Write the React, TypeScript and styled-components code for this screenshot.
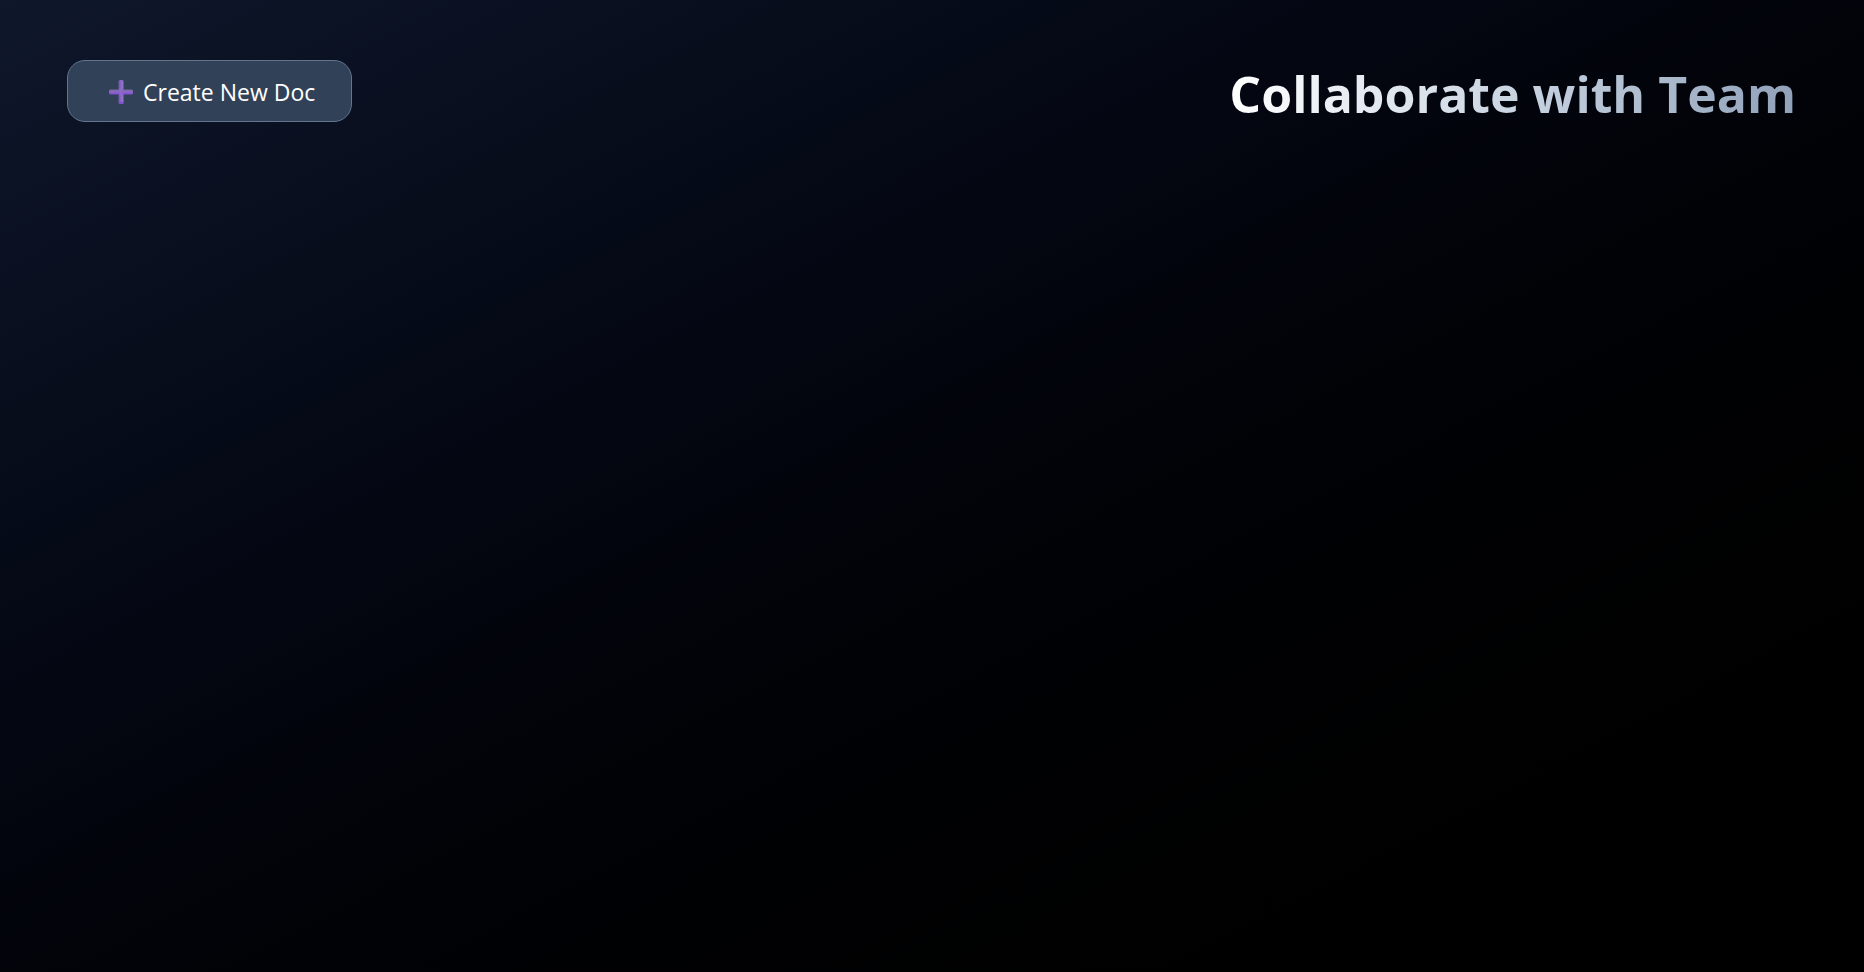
import React from "react";
import styled, { createGlobalStyle } from "styled-components";

const GlobalStyle = createGlobalStyle`
  *, *::before, *::after { box-sizing: border-box; }
  body {
    margin: 0;
    background: #000;
    font-family: "Segoe UI", "Open Sans", "Noto Sans", sans-serif;
  }
`;

const Page = styled.main`
  min-height: 100vh;
  padding: 60px 68px 60px 67px;
  background: linear-gradient(to bottom right in oklab, #0f172b, #000);
`;

const Header = styled.header`
  display: flex;
  align-items: flex-start;
  justify-content: space-between;
  gap: 32px;
`;

const CreateButton = styled.button`
  display: flex;
  align-items: center;
  gap: 10px;
  height: 62px;
  padding: 2px 36px 0 41px;
  border: 1px solid #62748e;
  border-radius: 18px;
  background: #314158;
  color: #fff;
  font-family: inherit;
  font-size: 23px;
  line-height: 32px;
  white-space: nowrap;
  cursor: pointer;
`;

const Title = styled.h1`
  margin: 0;
  background: linear-gradient(to right in oklab, #fff, #cad5e2 50%, #90a1b9);
  background-clip: text;
  -webkit-background-clip: text;
  color: transparent;
  font-size: 50px;
  font-weight: 700;
  line-height: 68px;
`;

const PlusIcon = () => (
  <svg width="24" height="24" viewBox="0 0 24 24" aria-hidden="true">
    <defs>
      <linearGradient id="plusAcross" x1="0" y1="0" x2="0" y2="1">
        <stop offset="0" stopColor="#7a6a9e" />
        <stop offset="0.5" stopColor="#8a69c4" />
        <stop offset="1" stopColor="#8149d8" />
      </linearGradient>
      <linearGradient id="plusDown" x1="0" y1="0" x2="1" y2="0">
        <stop offset="0" stopColor="#6f569f" />
        <stop offset="0.5" stopColor="#8b68cc" />
        <stop offset="1" stopColor="#9278c4" />
      </linearGradient>
    </defs>
    <rect x="9.5" y="0" width="5" height="24" rx="1.5" fill="url(#plusDown)" />
    <rect x="0" y="9.5" width="24" height="5" rx="1.5" fill="url(#plusAcross)" />
    <rect x="10.5" y="8" width="3" height="8" fill="#8b68cc" />
    <path d="M10.5 22.8h3" stroke="#8145dc" strokeWidth="1.6" strokeLinecap="round" />
  </svg>
);

export default function App() {
  return (
    <>
      <GlobalStyle />
      <Page>
        <Header>
          <CreateButton type="button">
            <PlusIcon />
            Create New Doc
          </CreateButton>
          <Title>Collaborate with Team</Title>
        </Header>
      </Page>
    </>
  );
}
